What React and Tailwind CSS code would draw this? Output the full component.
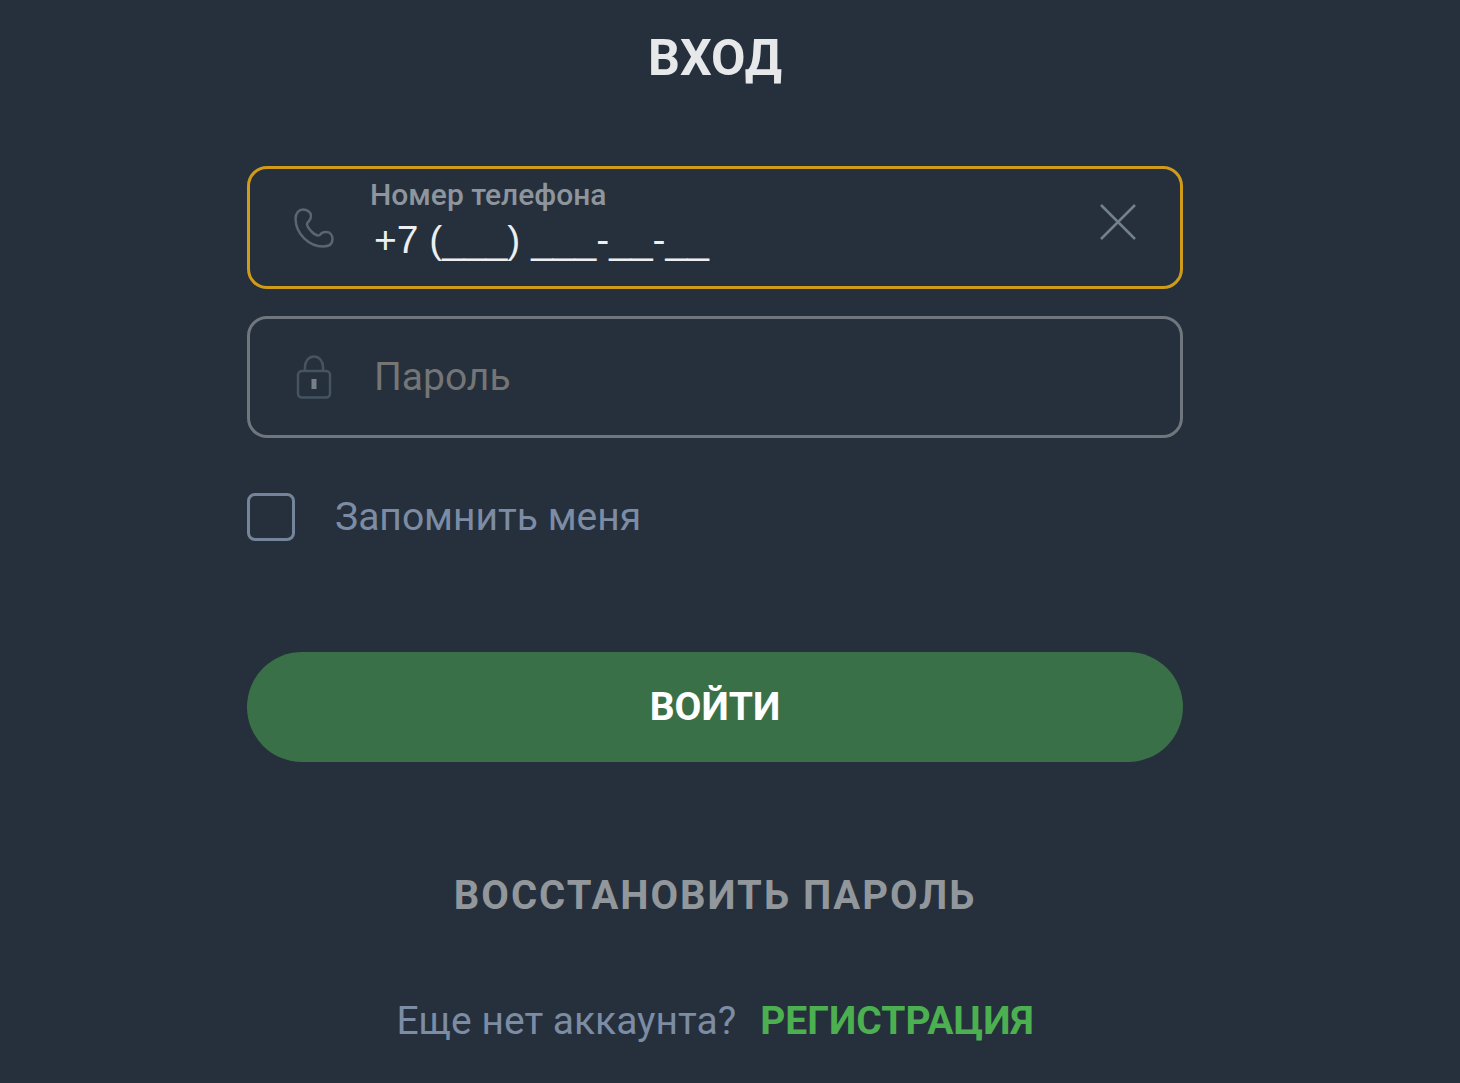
import React, { useState } from "react";

const PhoneIcon = () => (
  <svg className="size-10" viewBox="0 0 40 40" fill="none" stroke="#586572" strokeWidth="2.5" strokeLinejoin="round" strokeLinecap="round">
    <path d="M9 1.5C5 1.5 1.5 5 1.5 11C2 26 15 38.5 29 38.5C35 38.5 38.5 36 38.5 31C38.5 27 36 24 32 24C29 24 27 25 26 27C24 28 21 27 18 24C15 21 13 18 13 16C13 15 14 14 15 13C16 12 17 10 17 8C17 4 13 1.5 9 1.5Z" />
  </svg>
);

const LockIcon = () => (
  <svg className="h-11 w-10" viewBox="0 0 40 44" fill="none" stroke="#465461" strokeWidth="2.5">
    <rect x="4" y="16" width="32" height="26.5" rx="4" />
    <path d="M11 16V12C11 6 15 1.5 20 1.5S29 6 29 12V16" />
    <path d="M20 24V34" stroke="#74818d" strokeWidth="5" />
  </svg>
);

const CloseIcon = () => (
  <svg className="size-9" viewBox="0 0 36 36" fill="none" stroke="#73808d" strokeWidth="2.5">
    <path d="M1 1L35 35M35 1L1 35" />
  </svg>
);

const App = () => {
  const [phone, setPhone] = useState("+7 (___) ___-__-__");
  const [password, setPassword] = useState("");

  return (
    <main className="min-h-screen bg-[#25303c] pt-8 pr-[277px] pb-8 pl-[247px] font-['Roboto',sans-serif]">
      <form onSubmit={(e) => e.preventDefault()} className="flex flex-col">
        <h1 className="text-center text-[50px] leading-[52px] font-bold text-[#e6e8ea]">ВХОД</h1>

        <div className="mt-[82px] flex h-[123px] items-center rounded-[20px] border-3 border-[#d09b18] pr-11 pl-11">
          <PhoneIcon />
          <div className="mb-3 ml-9 flex flex-1 flex-col">
            <label htmlFor="phone" className="text-[30px] leading-9 font-medium text-[#8e959d]">
              Номер телефона
            </label>
            <input
              id="phone"
              type="tel"
              value={phone}
              onChange={(e) => setPhone(e.target.value)}
              className="w-full pl-1 font-['Liberation_Sans',sans-serif] text-[39px] leading-[54px] text-[#eceef0] outline-none"
            />
          </div>
          <button type="button" aria-label="Очистить" onClick={() => setPhone("")} className="mb-3">
            <CloseIcon />
          </button>
        </div>

        <div className="mt-[27px] flex h-[122px] items-center rounded-[20px] border-3 border-[#6f767d] px-11">
          <LockIcon />
          <input
            type="password"
            aria-label="Пароль"
            placeholder="Пароль"
            value={password}
            onChange={(e) => setPassword(e.target.value)}
            className="ml-10 flex-1 text-[39px] leading-[48px] text-[#eceef0] outline-none placeholder:text-[#757575]"
          />
        </div>

        <div className="mt-[55px] flex items-center gap-10">
          <input
            id="remember"
            type="checkbox"
            className="size-12 appearance-none rounded-lg border-3 border-[#74849a] checked:bg-[#3a7047]"
          />
          <label htmlFor="remember" className="text-[39px] leading-[48px] text-[#7d8ca5]">
            Запомнить меня
          </label>
        </div>

        <button type="submit" className="mt-[111px] h-[110px] rounded-full bg-[#3a7047] text-[39px] leading-[48px] font-bold text-white">
          ВОЙТИ
        </button>

        <a href="#restore" className="mt-[110px] self-center text-[40px] leading-[48px] font-bold tracking-[2px] text-[#92979c]">
          ВОССТАНОВИТЬ ПАРОЛЬ
        </a>

        <p className="mt-[77px] flex justify-center gap-6 text-[39px] leading-[48px] text-[#7d8ca5]">
          Еще нет аккаунта?
          <a href="#register" className="font-bold text-[#4caf50]">
            РЕГИСТРАЦИЯ
          </a>
        </p>
      </form>
    </main>
  );
};

export default App;
